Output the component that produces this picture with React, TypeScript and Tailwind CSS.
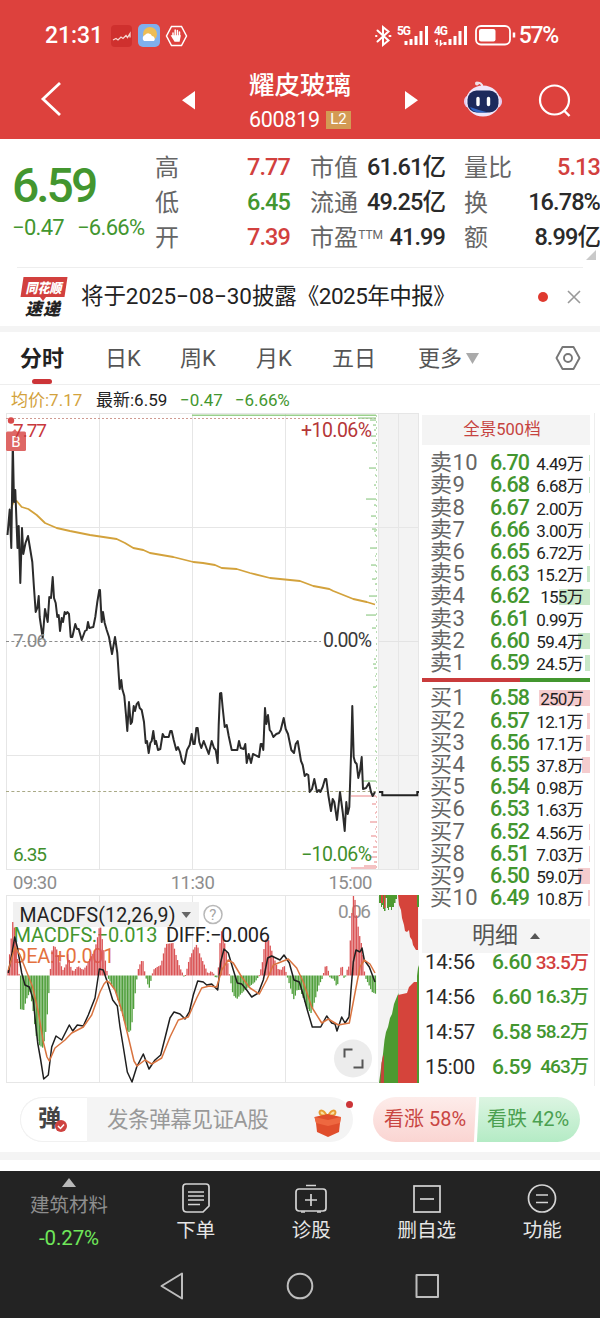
import { clsx } from "clsx";
import type { ReactNode } from "react";

const stats = [
  [
    { label: "高", value: "7.77", color: "text-[#d2403e]" },
    { label: "低", value: "6.45", color: "text-[#43962f]" },
    { label: "开", value: "7.39", color: "text-[#d2403e]" },
  ],
  [
    { label: "市值", value: "61.61亿", color: "text-[#2a2a2a]" },
    { label: "流通", value: "49.25亿", color: "text-[#2a2a2a]" },
    { label: "市盈", sup: "TTM", value: "41.99", color: "text-[#2a2a2a]" },
  ],
  [
    { label: "量比", value: "5.13", color: "text-[#d2403e]" },
    { label: "换", value: "16.78%", color: "text-[#2a2a2a]" },
    { label: "额", value: "8.99亿", color: "text-[#2a2a2a]" },
  ],
];

interface Order {
  label: string;
  price: string;
  volume: string;
  bar: number;
}

const sells: Order[] = [
  { label: "卖10", price: "6.70", volume: "4.49万", bar: 1 },
  { label: "卖9", price: "6.68", volume: "6.68万", bar: 1 },
  { label: "卖8", price: "6.67", volume: "2.00万", bar: 0 },
  { label: "卖7", price: "6.66", volume: "3.00万", bar: 1 },
  { label: "卖6", price: "6.65", volume: "6.72万", bar: 1 },
  { label: "卖5", price: "6.63", volume: "15.2万", bar: 3 },
  { label: "卖4", price: "6.62", volume: "155万", bar: 31 },
  { label: "卖3", price: "6.61", volume: "0.99万", bar: 0 },
  { label: "卖2", price: "6.60", volume: "59.4万", bar: 12 },
  { label: "卖1", price: "6.59", volume: "24.5万", bar: 5 },
];

const buys: Order[] = [
  { label: "买1", price: "6.58", volume: "250万", bar: 51 },
  { label: "买2", price: "6.57", volume: "12.1万", bar: 3 },
  { label: "买3", price: "6.56", volume: "17.1万", bar: 4 },
  { label: "买4", price: "6.55", volume: "37.8万", bar: 8 },
  { label: "买5", price: "6.54", volume: "0.98万", bar: 0 },
  { label: "买6", price: "6.53", volume: "1.63万", bar: 0 },
  { label: "买7", price: "6.52", volume: "4.56万", bar: 1 },
  { label: "买8", price: "6.51", volume: "7.03万", bar: 1 },
  { label: "买9", price: "6.50", volume: "59.0万", bar: 12 },
  { label: "买10", price: "6.49", volume: "10.8万", bar: 2 },
];

const trades = [
  { time: "14:56", price: "6.60", volume: "33.5万", up: true },
  { time: "14:56", price: "6.60", volume: "16.3万", up: false },
  { time: "14:57", price: "6.58", volume: "58.2万", up: false },
  { time: "15:00", price: "6.59", volume: "463万", up: false },
];

const priceLine =
  "7.5,535 9.7,509.5 11.3,548 12.8,442 14,502 15.3,490 17.5,548 18.7,526 20.3,583 22,528 23.3,554 25.5,543 28,536 30,548 32.3,562 34,588 35.7,612 37.3,608 38.7,596 39.7,617 42.7,638 45,609 47.7,622 49.3,597 51,598 52.7,577 54,598 55.7,603 57.3,617 58.7,615 60,631 61.7,618 63,622 64.7,612 66,614 67.3,612 69,614 70.7,637 72.3,637 75.3,624 77,629 78.7,629 81.7,640 85,631 86.7,630 88,622 89.3,628 93.3,627 95.3,617 97.3,602 99.3,590 100,590 101.7,622 103,612 104.7,623 106.7,630 109,637 112,654 115,637 117.3,653 119.7,689 121.3,680 122.3,689 124.3,696 126,715 127.3,731 129,702 130.7,724 132,722 133.7,706 135,711 136.7,704 138.3,702 139.7,708 141.7,710 144,722 145.7,743 147,741 148.7,753 150.3,743 151.7,741 153.3,731 155,744 156,741 158,750 160.3,749 162.7,734 164.3,737 168.7,737 170.3,731 171.7,731 173.7,740 176.3,750 178,747 180,752 182,761 184.3,764 187,750 189.7,745 191.7,734 193.3,744 194.7,744 196.3,728 197.7,728 199.3,742 201.3,748 203.7,741 206,747 208.7,754 211.7,741 214,748 215.7,750 217.7,763 218.7,725 220,693.5 221.3,693 222.7,708 224.7,727 226.7,725 228.7,736 231.7,750 237.3,750 239,741 240.7,748 243.7,749 245.3,744 246.7,763 248.7,754 251,763 253,754 259,757 260.7,744 262,744 263.3,750 265,708 266.3,724 268,715 269.7,730 271.3,732 273.3,737 276.3,734 279,733 280.7,730 283.7,718 285.7,729 288,734 291.3,750 294,753 295.7,744 297.7,741 301,761 302.7,765 304.7,776 306.7,774 308.3,775 309.7,792 312,789 314.3,779 317,792 319,790 320.3,792 322.7,787 325,779 326.3,779 328.3,795 331,811 332.7,799 334.3,802 337,820 340,792 342.7,812 344.7,831 346.3,802 347.7,814 349.3,807 351.3,747 352.3,706 353.7,757 355,762 356.7,764 358.3,778 360,771 361.7,757 363,789 366,788 369,783 371,792 372.7,796 375,792";

const averageLine =
  "11.3,508 13.5,502 16.7,501 21.7,507 28.3,509 36.7,515 45,523 56.7,528 70,531 90,535 116.7,539 125,543 133.3,548 143.3,550 150,553 173.3,557 193.3,562 203,563 215,565 221.7,568 236.7,569 250,573 270,578 300,581 313.3,586 329.3,589 333.3,591 353.3,599 366.7,602 375,604.5";

const diffLine =
  "8.3,973 11.7,955 14.7,937 17.3,947 21.7,973 25,985 29.3,987 33.3,1000 35.7,1025 37.7,1043 40.7,1060 43.7,1079 48.3,1075 51.7,1047 56,1036 61.7,1040 69.3,1025 72.7,1031 77.3,1025 83.3,1026 88.3,1015 95,998 99.3,969 103.3,970 107.3,982 112.7,1000 117.3,1006 120,1027 123.3,1047 127.3,1072 132,1082 136.7,1067 143.3,1054 149,1069 155,1060 160.7,1055 165,1038 170,1018 174,1012 180,1014 185,1019 189.3,1012 193.3,995 197.7,981 203.3,982 206.7,985 211.7,984 217.7,990 220.7,962 224,949 228.3,953 233.3,970 237.3,983 241.7,984 246.7,990 251.7,997 258.3,993 263.3,980 267.7,958 271.7,956 280,960 284,955 289.3,963 294,980 299.3,982 302.7,993 307.3,1010 312.3,1027 320.7,1027 326.7,1016 331.7,1023 335,1024 337,1031 341.7,1017 345,1023 349,1017 351,990 353.3,962 356,950 360,952 362,948 364.3,960 369.3,967 375,982";

const deaLine =
  "8.3,970 15,947 20,955 26.7,972 32.7,987 38.3,1012 43.3,1042 47,1057 49.3,1061 55,1048 65,1040 71.7,1033 83.3,1027 91.7,1015 100,992 104,984 106.7,981 110,983 115,990 121.7,1010 128.3,1037 134,1061 137,1066 145,1060 151.7,1064 161.7,1058 170,1037 178.3,1020 188.3,1017 196.7,998 201.7,988 209.3,986 216.7,987 221.7,970 228.3,960 233.3,963 241.7,977 250,988 259.3,994 266.7,980 273.3,965 288.3,959 296.7,968 303.3,982 311.7,1007 321.7,1023 328.3,1019 338.3,1025 349.3,1023 355,993 360,967 364.3,960 370,964 375,973";

// outline of the MACD histogram, bars are sampled from it
const histogram: [number, number][] = [
  [8, 970], [11, 940], [12.7, 922], [15, 930], [17, 955], [19, 974], [19.4, 1009], [24, 1010], [26, 1000], [30, 992],
  [33, 1010], [36, 1035], [39, 1045], [43, 1048], [46, 1030], [48, 1005], [50, 976], [50.3, 970], [52, 950], [54, 945],
  [57, 950], [60, 963], [63, 970], [66, 965], [68, 952], [70, 965], [73, 972], [78, 966], [83, 970], [87, 965],
  [90, 958], [94, 952], [97, 940], [100, 923], [103, 945], [106, 965], [108, 978], [112, 985], [116, 992], [119, 1005],
  [124, 1020], [128, 1033], [131, 1030], [133, 1015], [136, 985], [138, 970], [141, 961], [143, 961], [145, 974],
  [146, 978], [149, 989], [152, 976], [153, 970], [157, 967], [161, 965], [163, 955], [166, 944], [173, 943],
  [176, 955], [180, 968], [183, 974], [184.5, 978], [186, 973], [189, 960], [193, 950], [197, 944], [200, 955],
  [204, 964], [208, 974], [211, 971], [214, 974], [216, 979], [218, 975], [219, 955], [221, 930], [223, 935],
  [226, 950], [229, 972], [230, 978], [233, 995], [237, 999], [240, 995], [245, 990], [250, 986], [255, 982],
  [259, 976], [260, 972], [262, 965], [265, 940], [268, 938], [270, 945], [274, 958], [278, 969], [281, 970],
  [284, 965], [287, 976], [291, 990], [294, 1000], [297, 990], [300, 990], [304, 1000], [307, 1008], [311, 1013],
  [315, 1000], [319, 985], [323, 977], [324, 970], [326, 964], [329, 973], [330, 978], [334, 979], [337, 988],
  [339, 977], [340, 970], [342, 964], [344, 978], [345, 981], [346, 972], [349.5, 965], [350, 945], [352, 910],
  [353, 895], [355, 900], [357, 920], [360, 938], [362, 946], [364, 968], [365, 977], [368, 983], [372, 992], [376, 994],
];

function sampleHistogram() {
  const bars: { x: number; y: number }[] = [];
  let i = 0;
  for (let x = 8; x < 376; x += 1.57) {
    while (i < histogram.length - 2 && histogram[i + 1][0] < x) i++;
    const [x0, y0] = histogram[i];
    const [x1, y1] = histogram[i + 1];
    bars.push({ x, y: y0 + ((y1 - y0) * (x - x0)) / (x1 - x0) });
  }
  return bars;
}

// pending order depth, drawn from the right edge of the price chart: [y, width]
const askDepth = [
  [418, 18], [420, 6], [425, 3], [430, 2], [436, 5], [443, 4], [450, 2], [468, 7], [475, 1], [485, 2], [499, 10], [505, 2],
  [516, 5], [524, 1], [529, 4], [531, 2], [535, 1], [548, 6], [556, 1], [565, 5], [571, 1], [579, 4], [584, 1], [596, 7],
  [600, 1], [615, 10], [628, 4], [659, 2], [664, 3], [668, 2], [676, 1], [687, 3], [696, 1], [707, 2], [712, 1], [729, 1],
  [739, 1], [751, 1], [760, 1], [772, 1], [781, 14],
];
const bidDepth = [
  [796, 25], [804, 4], [813, 1], [822, 6], [829, 1], [836, 5], [841, 1], [847, 3], [852, 3], [857, 7], [862, 2], [866, 12],
  [868, 25],
];

function PriceChart() {
  return (
    <svg width="420" height="458" viewBox="0 413 420 458" className="block" fontFamily="Roboto, sans-serif">
      <rect x="378" y="413" width="41" height="457" fill="#f3f3f3" />
      <g stroke="#e6e6e6" strokeWidth="1">
        {[6.5, 99.5, 192.5, 285.5, 378.5, 398.5, 418.5].map((x) => (
          <line key={x} x1={x} x2={x} y1="413" y2="870" />
        ))}
        {[413.5, 527.5, 755.5, 869.5].map((y) => (
          <line key={y} x1="6" x2="419" y1={y} y2={y} />
        ))}
      </g>
      <line x1="192" x2="376" y1="415.3" y2="415.3" stroke="#9bd08c" strokeWidth="1.4" />
      <line x1="6" x2="376" y1="418.5" y2="418.5" stroke="#cf9a91" strokeDasharray="2 2" />
      <line x1="6" x2="321" y1="641.5" y2="641.5" stroke="#8d8d8d" strokeDasharray="3 2.4" />
      <line x1="378" x2="419" y1="641.5" y2="641.5" stroke="#e3e3e3" />
      <line x1="6" x2="376" y1="791.5" y2="791.5" stroke="#a9a986" strokeDasharray="3 2.4" />
      <line x1="376.5" x2="376.5" y1="415" y2="790" stroke="#b9dcb3" strokeDasharray="2 4" />
      <line x1="376.5" x2="376.5" y1="796" y2="869" stroke="#f0bcbc" strokeDasharray="2 3" />
      {askDepth.map(([y, w]) => (
        <rect key={y} x={376 - w} y={y - 0.6} width={w} height="1.3" fill="#9ccf93" />
      ))}
      {bidDepth.map(([y, w]) => (
        <rect key={y} x={376 - w} y={y - 0.7} width={w} height="1.4" fill="#efa9aa" />
      ))}
      <polyline points={averageLine} fill="none" stroke="#d3a23c" strokeWidth="1.8" strokeLinejoin="round" />
      <polyline points={priceLine} fill="none" stroke="#2b2b2b" strokeWidth="2" strokeLinejoin="round" />
      <polyline points="379,792 382.3,792 382.3,795.3 417.3,795.3 417.3,792 419,792" fill="none" stroke="#222" strokeWidth="2" />
      <circle cx="11" cy="420.5" r="3.2" fill="#d84a4a" />
      <path d="M15 429l-4 4h7z" fill="#e26c6a" />
      <rect x="6" y="431.5" width="20" height="19.5" rx="1.5" fill="#de6765" />
      <text x="11.3" y="447" fontSize="15" fill="#fff" textLength="10">B</text>
      <text x="13" y="436.5" fontSize="19" fill="#c8393d" textLength="34">7.77</text>
      <text x="301" y="436.5" fontSize="19.5" fill="#b53638" textLength="71">+10.06%</text>
      <text x="13" y="646.5" fontSize="19" fill="#8b8b8b" textLength="34">7.06</text>
      <text x="323" y="646.5" fontSize="19.5" fill="#3a3a3a" textLength="49">0.00%</text>
      <text x="13" y="860.5" fontSize="19" fill="#3f8f2c" textLength="34">6.35</text>
      <text x="301" y="860.5" fontSize="19.5" fill="#3f8f2c" textLength="71">−10.06%</text>
    </svg>
  );
}

function MacdChart() {
  return (
    <svg width="420" height="190" viewBox="0 895 420 190" className="block" fontFamily="Roboto, sans-serif">
      <g stroke="#e6e6e6" strokeWidth="1">
        {[6.5, 99.5, 192.5, 285.5].map((x) => (
          <line key={x} x1={x} x2={x} y1="895" y2="1083" />
        ))}
        <line x1="6" x2="378" y1="895.5" y2="895.5" />
        <line x1="6" x2="378" y1="989.5" y2="989.5" />
        <line x1="6" x2="419" y1="1082.5" y2="1082.5" />
      </g>
      <rect x="13" y="902" width="186" height="25" fill="#f1f1f1" />
      <text x="13.5" y="942" fontSize="20" fill="#43962f" textLength="144">MACDFS:−0.013</text>
      <text x="13.5" y="963" fontSize="20" fill="#e4713f" textLength="101">DEA:+0.001</text>
      <text x="338" y="918" fontSize="19" fill="#929292" textLength="33">0.06</text>
      {sampleHistogram().map(({ x, y }) => (
        <rect
          key={x}
          x={x - 0.6}
          y={Math.min(y, 975.5)}
          width="1.3"
          height={Math.max(1, Math.abs(y - 975.5))}
          fill={y < 975.5 ? "#da5355" : "#4f9f3b"}
        />
      ))}
      <text x="19.5" y="922" fontSize="19.5" fill="#222" textLength="156">MACDFS(12,26,9)</text>
      <path d="M181.5 912h9.5l-4.75 6z" fill="#666" />
      <circle cx="213" cy="914.5" r="9" fill="#fff" stroke="#b8b8b8" strokeWidth="1.5" />
      <text x="209.2" y="920" fontSize="15" fill="#a5a5a5">?</text>
      <text x="166" y="942" fontSize="20" fill="#222" textLength="104">DIFF:−0.006</text>
      <polyline points={diffLine} fill="none" stroke="#1f1f1f" strokeWidth="1.5" strokeLinejoin="round" />
      <polyline points={deaLine} fill="none" stroke="#d9733f" strokeWidth="1.5" strokeLinejoin="round" />

      <rect x="378" y="895" width="41" height="188" fill="#f3f3f3" />
      <path d="M378 989.5h41M398.5 895v188" stroke="#e3e3e3" />
      <path d="M379 895V903H381V907H382V905H383V909H384V911H385.5V898H387V908H388V910H389V907H391V910H392V907H394V903H395.5V899H397V895z" fill="#4d9a30" />
      <path d="M381 895h2v8h-2zM384 895h1.5v13h-1.5z" fill="#d5443b" />
      <path d="M398 895L399 905 401 910 402 918 404 925 405 931 407 932 409 930 410 937 412 940 413 945 416 950H418V895z" fill="#d5443b" />
      <path d="M417 895h2v12h-2z" fill="#4d9a30" />
      <path d="M379 1083L381 1068 383 1054 384.5 1040 386 1032 388 1027 390 1018 392 1014 394 1004 396 999 398.5 993V1083z" fill="#4d9a30" />
      <path d="M380.5 1083L381.5 1063 383 1056 384 1055V1083z" fill="#c1473a" />
      <path d="M398 1083V995L407 993 409 987 412 984 414 982H417V1083z" fill="#d5443b" />
      <path d="M417 1083V976L418 968 419 965V1083z" fill="#4d9a30" />

      <circle cx="353" cy="1058.5" r="19" fill="#ececec" />
      <path d="M344.5 1057.5v-8h8M362.5 1059.5v8h-9" fill="none" stroke="#555" strokeWidth="2" />
    </svg>
  );
}

function StatusBar() {
  return (
    <div className="flex h-[70px] items-center pt-0.5 pr-[42px] pl-[45px] text-[23px] font-medium">
      <span className="w-[65px] tracking-[-0.1px]">21:31</span>
      <svg width="78" height="24" viewBox="110 24 78 24">
        <rect x="111" y="25" width="21" height="22" rx="4" fill="#cf302e" />
        <path d="M113 40l3-1.5 2 1.500 3-3 2 1.500 3-3 1.500 2 2.500-4v4" fill="none" stroke="#f6d7d0" strokeWidth="1.3" />
        <rect x="138" y="24" width="22" height="23" rx="5" fill="#7fb0ed" />
        <circle cx="150" cy="34" r="7" fill="#eebd54" />
        <path d="M144 41a3.5 3.5 0 0 1 1-6 4 4 0 0 1 7 1 3 3 0 0 1 2 5z" fill="#fff" />
        <path d="M171.5 26.5h10l5 9.5-5 9.5h-10l-5-9.5z" fill="none" stroke="#fff" strokeWidth="1.5" />
        <path d="M173 38v-5M175.2 36v-6M177.4 36v-5.5M179.5 37v-5M172 36l3 5h4l1-5z" fill="#fff" stroke="#fff" strokeWidth="1.5" strokeLinecap="round" />
      </svg>
      <svg width="143" height="24" viewBox="374 24 143 24" className="ml-auto" fontFamily="Roboto, sans-serif">
        <path d="M377.5 30.5l11 10-5.5 4.5V27l5.5 4.5-11 10M376 36h.5M389.5 36h1" fill="none" stroke="#fff" strokeWidth="2" strokeLinecap="round" />
        <text x="397" y="35" fontSize="12" fontWeight="700" fill="#fff" textLength="14">5G</text>
        <path d="M406 45v-4M411 45v-6M416 45v-9M421 45V31M426.5 45V26" stroke="#fff" strokeWidth="3" />
        <text x="434" y="35" fontSize="12" fontWeight="700" fill="#fff" textLength="14">4G</text>
        <path d="M435 42l2-2v5M440.5 40v5l2-2" fill="none" stroke="#fff" strokeWidth="1.5" />
        <path d="M445 45v-3M450 45v-6M455 45v-9M460 45V31M465.5 45V26" stroke="#fff" strokeWidth="3" />
        <rect x="476" y="26" width="34" height="18.5" rx="5" fill="none" stroke="#fff" strokeWidth="1.8" />
        <rect x="479" y="29" width="16.5" height="12.5" rx="2" fill="#fff" />
        <path d="M514 32.5v5" stroke="#fff" strokeWidth="2.5" />
      </svg>
      <span className="ml-0.5 tracking-[-1.3px]">57%</span>
    </div>
  );
}

function TitleBar() {
  return (
    <div className="flex h-[69px] items-start">
      <svg width="249" height="69" viewBox="0 70 249 69" fill="none">
        <path d="M60 83L43 99l17 16" stroke="#fff" strokeWidth="2.8" />
        <path d="M195 91v18.5L182 100.2z" fill="#fff" />
      </svg>
      <div className="flex w-[102px] flex-col">
        <span className="text-[25.5px] leading-[30px] font-medium whitespace-nowrap">耀皮玻璃</span>
        <span className="mt-[5px] flex items-center justify-between">
          <span className="text-[21.5px] leading-[29px] tracking-[-0.3px]">600819</span>
          <span className="flex h-[18px] w-[25px] items-center justify-center bg-[#d39a54] text-[15px] leading-none">L2</span>
        </span>
      </div>
      <svg width="249" height="69" viewBox="351 70 249 69" fill="none">
        <path d="M405 91v18.5l13-9.3z" fill="#fff" />
        <path d="M476 83.5q4-2 6 1.5v4" stroke="#eee4ee" strokeWidth="2" />
        <circle cx="477" cy="83.5" r="2" fill="#f0dfe6" />
        <rect x="464" y="95" width="38" height="13" rx="6" fill="#e6ccee" />
        <ellipse cx="483" cy="101" rx="17" ry="15.5" fill="#efe6fa" />
        <rect x="467.5" y="90.5" width="31" height="22" rx="9" fill="#1d2a5c" />
        <path d="M470 107q2 4.500 8 5.500h10q-10-2.500-18-5.500z" fill="#3468c6" />
        <path d="M478 98.5v6M488.5 98.5v6" stroke="#fff" strokeWidth="3.4" strokeLinecap="round" />
        <circle cx="554.5" cy="100" r="14.5" stroke="#fff" strokeWidth="2.2" />
        <path d="M564 110.5l5.5 5.5" stroke="#fff" strokeWidth="2.4" />
      </svg>
    </div>
  );
}

function Quote() {
  return (
    <section className="relative flex h-32 text-[#666]">
      <div className="w-[155px] pl-3 text-[#43962f]">
        <div className="mt-5 text-[48px] leading-[54px] font-medium tracking-[-3px]">6.59</div>
        <div className="mt-px flex gap-[13px] text-[22px] leading-7 whitespace-nowrap">
          <span className="tracking-[-0.7px]">−0.47</span>
          <span className="tracking-[-0.7px]">−6.66%</span>
        </div>
      </div>
      {stats.map((column, i) => (
        <div key={i} className={clsx("pt-[11px]", i === 0 ? "w-[135px]" : i === 1 ? "ml-5 w-[135px]" : "ml-[19px] w-[136px]")}>
          {column.map((item) => (
            <div key={item.label} className="flex h-[35px] items-center justify-between whitespace-nowrap">
              <span className="flex text-2xl tracking-[0.1px]">
                {item.label}
                {item.sup && <sup className="top-0 mt-[7px] text-xs leading-none tracking-normal">{item.sup}</sup>}
              </span>
              <span className={clsx("text-[23.5px] font-medium tracking-[-0.9px]", item.color)}>{item.value}</span>
            </div>
          ))}
        </div>
      ))}
      <svg width="10" height="10" className="absolute right-1 bottom-[7px]">
        <path d="M10 0v10H0z" fill="#c9c9c9" />
      </svg>
    </section>
  );
}

function NewsBar() {
  return (
    <section className="mx-[17px] flex h-[59px] items-center border-t border-[#eee] text-[22.5px] text-[#222]">
      <div className="ml-[3px] w-[61px] italic">
        <svg width="48" height="42" viewBox="20 276 48 42" fontFamily="'Noto Sans CJK SC', sans-serif" fontWeight="900">
          <path d="M23.5 277H67.5l-3 20H46l-3 4-3-4H20.5z" fill="#d2403e" />
          <text x="25.5" y="292.5" fontSize="13.5" fill="#fff" textLength="36" lengthAdjust="spacingAndGlyphs">同花顺</text>
          <text x="25" y="314.5" fontSize="17" fill="#222" textLength="35">速递</text>
        </svg>
      </div>
      <span className="whitespace-nowrap">
        <span className="tracking-[-0.08px]">将于2025−08−30披露</span>
        <span className="tracking-[-0.5px]">《2025年中报》</span>
      </span>
      <span className="mr-[19px] ml-auto size-2.5 rounded-full bg-[#df392f]" />
      <svg width="14" height="14" className="mr-0.5">
        <path d="M1 1l12 12M13 1L1 13" stroke="#999" strokeWidth="1.6" />
      </svg>
    </section>
  );
}

function Tabs() {
  return (
    <nav className="flex h-[53px] items-center border-b border-[#eee] pl-5 text-[22px] whitespace-nowrap text-[#555]">
      <span className="relative flex h-full w-[85px] items-center font-bold text-[#222]">
        分时
        <i className="absolute bottom-0 left-3 h-[5px] w-5 rounded-full bg-[#cc3538]" />
      </span>
      <span className="w-[75px]">日K</span>
      <span className="w-[76px]">周K</span>
      <span className="w-[76px]">月K</span>
      <span className="w-[86px]">五日</span>
      <span>更多</span>
      <svg width="13" height="11" className="ml-1">
        <path d="M0 0h13L6.5 11z" fill="#aaa" />
      </svg>
      <svg width="28" height="26" viewBox="0 0 28 26" className="mr-[18px] ml-auto" fill="none" stroke="#777" strokeWidth="1.9">
        <path d="M8.5 2h11l6 11-6 11h-11l-6-11z" strokeLinejoin="round" />
        <circle cx="14" cy="13" r="4" />
      </svg>
    </nav>
  );
}

function OrderRow({ order, sell }: { order: Order; sell: boolean }) {
  return (
    <div className="relative flex h-[22.22px] items-center leading-[22px] whitespace-nowrap">
      <i
        className={clsx("absolute right-0 bottom-[3px] h-4", sell ? "bg-[#c9e8c8]" : "bg-[#f5ccce]")}
        style={{ width: order.bar }}
      />
      <span className="relative w-[68px] pl-2 text-[22px] tracking-[0.4px] text-[#666]">{order.label}</span>
      <span className="relative w-[42px] text-[21.5px] font-medium tracking-[-0.9px] text-[#43962f]">{order.price}</span>
      <span className="relative mt-0.5 ml-auto pr-[7px] text-[17px] tracking-[-0.7px] text-[#222]">{order.volume}</span>
    </div>
  );
}

function OrderBook() {
  return (
    <aside className="ml-0.5 w-[173px] border-r border-[#eee]">
      <div className="w-[168px]">
        <div className="mt-0.5 flex h-[30px] items-center justify-center bg-[#f4f4f4] pr-2 text-[16.5px] text-[#c64340]">
          全景500档
        </div>
        <div className="mt-[7px]">
          {sells.map((order) => (
            <OrderRow key={order.label} order={order} sell />
          ))}
        </div>
        <div className="mt-1 mb-[5px] flex h-1">
          <div className="w-[98px] bg-[#c93b3c]" />
          <div className="flex-1 bg-[#43962f]" />
        </div>
        {buys.map((order) => (
          <OrderRow key={order.label} order={order} sell={false} />
        ))}
        <div className="mt-2.5 flex h-[34px] items-center justify-center gap-3 bg-[#f4f4f4] text-[23px] text-[#555]">
          明细
          <svg width="10" height="6">
            <path d="M0 6h10L5 0z" fill="#555" />
          </svg>
        </div>
        <div className="-mt-2">
          {trades.map((trade) => (
            <div key={trade.time + trade.volume} className="flex h-[34.9px] items-center pl-[3px] whitespace-nowrap">
              <span className="w-[67px] text-[20.5px] tracking-[-0.2px] text-[#2a2a2a]">{trade.time}</span>
              <span className="w-[42px] text-[21px] font-medium tracking-[-0.6px] text-[#43962f]">{trade.price}</span>
              <span
                className={clsx("ml-auto pr-0.5 text-[19px] font-medium tracking-[-0.9px]", trade.up ? "text-[#d2403e]" : "text-[#43962f]")}
              >
                {trade.volume}
              </span>
            </div>
          ))}
        </div>
      </div>
    </aside>
  );
}

function CommentBar() {
  return (
    <section className="flex h-[66px] items-center pl-5">
      <div className="relative flex h-[45px] w-[333px] items-center rounded-full bg-[#f4f4f4] text-[21.5px] text-[#999]">
        <div className="relative flex h-full w-[67px] items-center rounded-l-full border border-r-0 border-[#f1f1f1] bg-white pl-[17px] text-[23px] font-bold text-[#444]">
          弹
          <svg width="12" height="12" className="absolute top-[22px] left-[34px]">
            <circle cx="6" cy="6" r="6" fill="#cf4340" />
            <path d="M3 6l2.5 2.500L9 4.500" fill="none" stroke="#fff" strokeWidth="1.5" />
          </svg>
        </div>
        <span className="ml-5 pt-0.5 tracking-[-0.4px] whitespace-nowrap">发条弹幕见证A股</span>
        <svg width="28" height="31" viewBox="314 1108 28 31" className="mt-1.5 mr-[11px] ml-auto">
          <path d="M327 1117c-4-8-9-6-7-2 1 2 4 2 7 2zm1 0c4-8 9-6 7-2-1 2-4 2-7 2z" fill="#f8e0a0" stroke="#e79c31" strokeWidth="2" />
          <path d="M314.5 1118l13-3 13.5 3-1 6-1 9-11 5-11-5-1-9z" fill="#e04e2c" />
          <path d="M314.5 1118l13.5 3 13-3-1 6-12 3-12-3z" fill="#ee6840" />
        </svg>
        <i className="absolute top-1 right-0 size-[7px] rounded-full bg-[#cc3538]" />
      </div>
      <div className="relative ml-5 flex h-[45px] w-[207px] overflow-hidden rounded-full text-xl whitespace-nowrap">
        <div className="flex flex-1 items-center bg-linear-to-b from-[#fdecea] to-[#fad5d2] pl-[11px] text-[#c94643]">看涨 58%</div>
        <div className="flex w-[104px] items-center bg-linear-to-b from-[#dcf5e2] to-[#b4ebc5] pl-[11px] text-[#4ba050]">看跌 42%</div>
        <i className="absolute -top-1 left-[102px] h-14 w-[2.5px] rotate-3 bg-white" />
      </div>
    </section>
  );
}

function NavItem({ label, children }: { label: string; children: ReactNode }) {
  return (
    <div className="flex w-[115.5px] flex-col items-center">
      <svg width="34" height="32" viewBox="0 0 34 32" fill="none" stroke="#d4d4d4" strokeWidth="1.7">
        {children}
      </svg>
      <span className="mt-[3px] text-[19.5px] leading-7">{label}</span>
    </div>
  );
}

function BottomNav() {
  return (
    <footer className="h-[147px] bg-[#232323] text-[#e6e6e6]">
      <div className="flex h-20 pt-[11px]">
        <div className="-mt-1 flex w-[138px] flex-col items-center">
          <svg width="14" height="9" className="shrink-0">
            <path d="M0 9h14L7 0z" fill="#b9b9b9" />
          </svg>
          <span className="mt-[3px] text-[19.5px] leading-8 text-[#8d8d8d]">建筑材料</span>
          <span className="text-[20.5px] leading-8 tracking-[-0.1px] text-[#70e75a]">-0.27%</span>
        </div>
        <NavItem label="下单">
          <path d="M7 2h20q3 0 3 3v19l-6 6H8q-4 0-4-4V5q0-3 3-3z" />
          <path d="M9 10h16M9 14h16M9 18h16M9 22.5h12" />
        </NavItem>
        <NavItem label="诊股">
          <rect x="2" y="7" width="30" height="22" rx="3" />
          <path d="M12 3.5h10M17 12v12M11 18h12M7 30h4M23 30h4" />
        </NavItem>
        <NavItem label="删自选">
          <rect x="4" y="4" width="26" height="26" />
          <path d="M10 17h14" />
        </NavItem>
        <NavItem label="功能">
          <circle cx="17" cy="16.5" r="13.5" />
          <path d="M11 13h12M11 20.5h12" />
        </NavItem>
      </div>
      <svg width="600" height="67" viewBox="0 1251 600 67" fill="none" stroke="#bdbdbd" strokeWidth="2" strokeLinejoin="round">
        <path d="M182 1273.5v25L161.5 1286z" />
        <circle cx="300" cy="1286" r="12.3" />
        <rect x="416.5" y="1275" width="21.5" height="22" />
      </svg>
    </footer>
  );
}

export default function App() {
  return (
    <div className="h-[1318px] w-[600px] overflow-hidden bg-white font-[Roboto,'Noto_Sans_CJK_SC',sans-serif] text-[#222]">
      <header className="h-[139px] bg-[#dd413d] text-white">
        <StatusBar />
        <TitleBar />
      </header>
      <Quote />
      <NewsBar />
      <div className="h-1.5 bg-[#f4f4f4]" />
      <Tabs />
      <div className="flex h-7 items-center pt-1 pl-[11px] text-[17px] whitespace-nowrap">
        <span className="w-[85px] text-[#d3a23c]">均价:7.17</span>
        <span className="w-[84px]">最新:6.59</span>
        <span className="w-[55px] text-[#43962f]">−0.47</span>
        <span className="tracking-[-0.1px] text-[#43962f]">−6.66%</span>
      </div>
      <main className="flex h-[673px]">
        <div className="w-[420px]">
          <PriceChart />
          <div className="flex h-6 items-center justify-between pt-0.5 pr-12 pl-[13px] text-[18.5px] tracking-[-0.5px] text-[#8d8d8d]">
            <span>09:30</span>
            <span>11:30</span>
            <span>15:00</span>
          </div>
          <MacdChart />
        </div>
        <OrderBook />
      </main>
      <CommentBar />
      <div className="mb-[11px] h-2 bg-[#f4f4f4]" />
      <BottomNav />
    </div>
  );
}
